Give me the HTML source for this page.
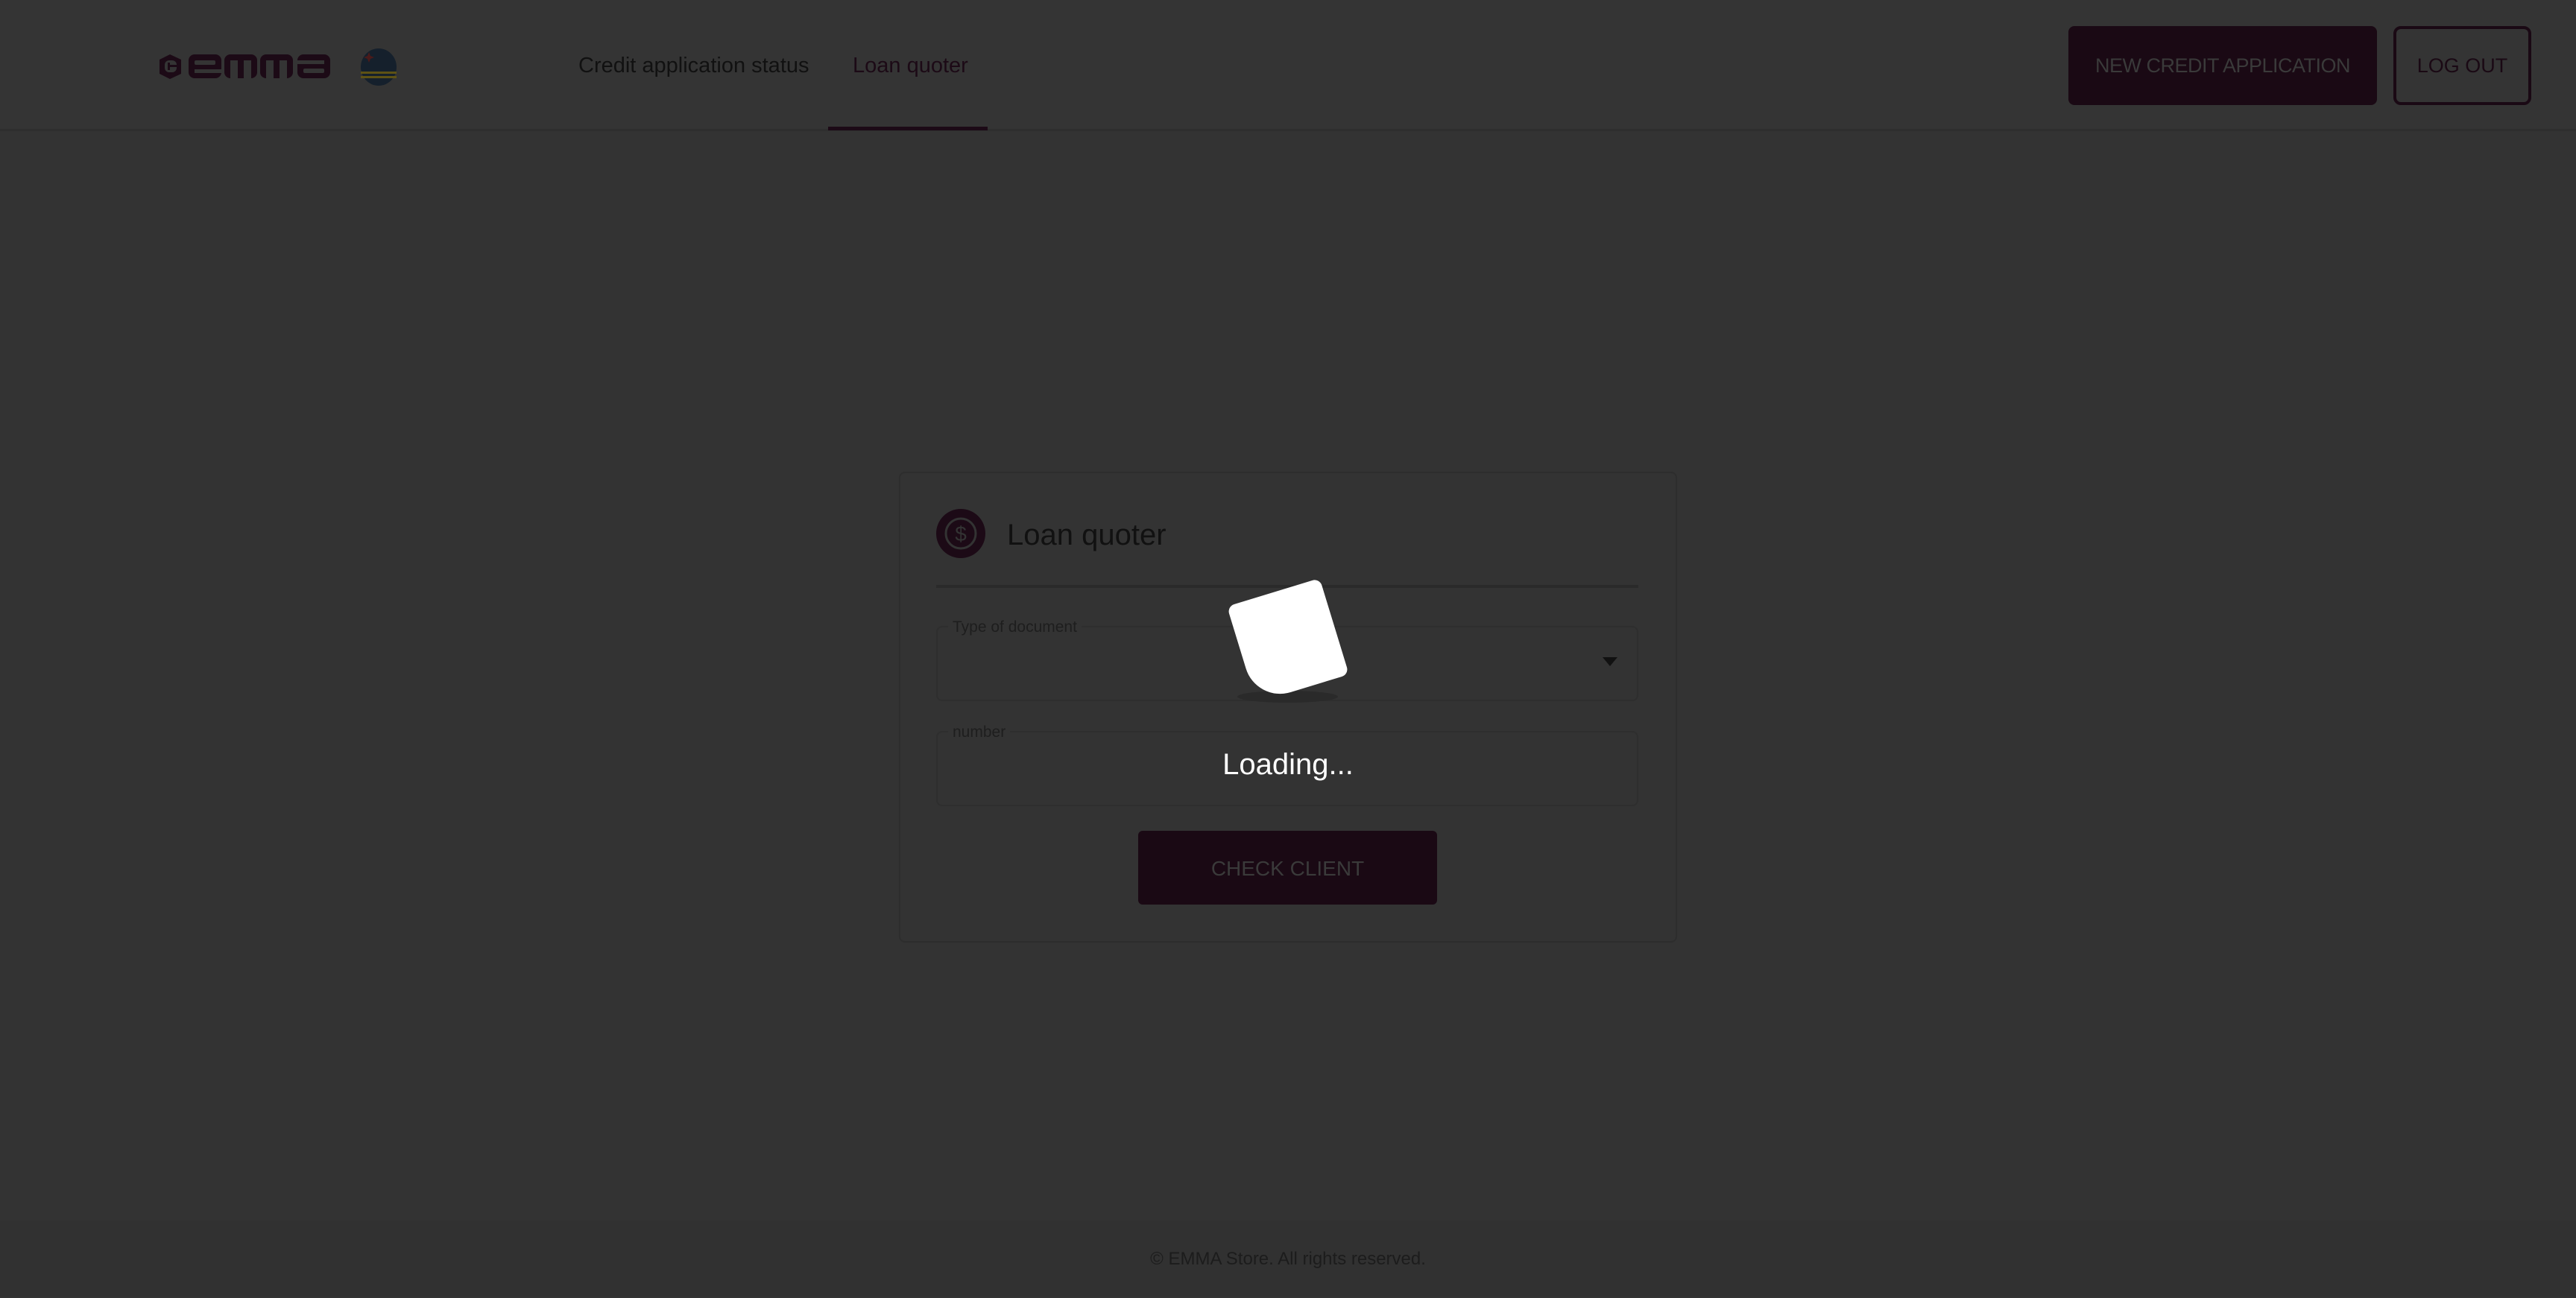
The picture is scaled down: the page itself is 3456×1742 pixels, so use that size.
<!DOCTYPE html>
<html><head><meta charset="utf-8"><style>
*{margin:0;padding:0;box-sizing:border-box}
body{width:3456px;height:1740px;background:#333333;font-family:"Liberation Sans",sans-serif;position:relative;overflow:hidden}
.hdr{position:absolute;left:0;top:0;width:3456px;height:176px;background:#343434;border-bottom:3px solid #2e2e2e}
.nav{position:absolute;top:72px;font-size:29px;color:#111}
.abs{position:absolute}
.footer{position:absolute;left:0;top:1638px;width:3456px;height:102px;background:#313131;text-align:center;font-size:24px;color:#1c1c1c;line-height:104px}
.card{position:absolute;left:1206px;top:633px;width:1044px;height:632px;border:2px solid #2d2d2d;border-radius:8px}
.field{position:absolute;left:1256px;width:942px;height:101px;border:2px solid #2e2e2e;border-radius:8px}
.lbl{position:absolute;font-size:21px;color:#1e1e1e;background:#333;padding:0 6px}
</style></head><body>
<div class="hdr"></div>
<svg class="abs" style="left:212px;top:73px" width="245" height="33" viewBox="0 0 245 33">
<g fill="#1c0a16">
<polygon points="16,0 31,7 31,26 16,33 2,26 2,7"/>
<rect x="41" y="0" width="44" height="32" rx="8"/>
<rect x="89" y="0" width="44" height="32" rx="8"/>
<rect x="137" y="0" width="44" height="32" rx="8"/>
<rect x="187" y="0" width="44" height="32" rx="8"/>
</g>
<g fill="#343434">
<rect x="9" y="8" width="16" height="16" rx="6"/>
<rect x="49" y="8" width="28" height="6" rx="2"/>
<rect x="49" y="20" width="40" height="5"/>
<rect x="97" y="8" width="10" height="26"/>
<rect x="115" y="8" width="10" height="26"/>
<rect x="145" y="8" width="10" height="26"/>
<rect x="163" y="8" width="10" height="26"/>
<rect x="185" y="8" width="38" height="5"/>
<rect x="195" y="19" width="28" height="6" rx="2"/>
</g>
<g fill="#1c0a16"><rect x="13" y="14" width="12" height="3"/><rect x="13" y="11" width="3" height="10"/></g>
</svg>
<svg class="abs" style="left:484px;top:65px" width="48" height="50"><ellipse cx="24" cy="25" rx="24" ry="25" fill="#15202c"/><rect x="0" y="31" width="48" height="3" fill="#5e5214"/><rect x="0" y="37" width="48" height="3" fill="#5e5214"/><path d="M11,5 L13,10 L18,12 L13,14 L11,19 L9,14 L4,12 L9,10Z" fill="#4a1a1a"/></svg>
<div class="nav" style="left:776px">Credit application status</div>
<div class="nav" style="left:1144px;color:#1c0a16">Loan quoter</div>
<div class="abs" style="left:1111px;top:170px;width:214px;height:5px;background:#1c0a16"></div>
<div class="abs" style="left:2775px;top:35px;width:414px;height:106px;background:#1a0914;border-radius:8px;color:#3a3a3a;font-size:27px;text-align:center;line-height:106px;letter-spacing:-0.5px">NEW CREDIT APPLICATION</div>
<div class="abs" style="left:3211px;top:35px;width:185px;height:106px;border:4px solid #1a0914;border-radius:10px;color:#1a0914;font-size:27px;text-align:center;line-height:98px">LOG OUT</div>

<div class="card"></div>
<svg class="abs" style="left:1256px;top:683px" width="66" height="66"><circle cx="33" cy="33" r="33" fill="#1c0a16"/><circle cx="33" cy="33" r="20" fill="none" stroke="#333" stroke-width="3"/><text x="33" y="43" font-size="28" text-anchor="middle" fill="#333" font-family="Liberation Sans">$</text></svg>
<div class="abs" style="left:1351px;top:696px;font-size:40px;color:#111">Loan quoter</div>
<div class="abs" style="left:1256px;top:785px;width:942px;height:4px;background:#2a2a2a"></div>
<div class="field" style="top:840px"></div>
<div class="lbl" style="left:1272px;top:830px">Type of document</div>
<svg class="abs" style="left:2150px;top:882px" width="20" height="12"><path d="M0,0 H20 L10,12Z" fill="#111"/></svg>
<div class="field" style="top:981px"></div>
<div class="lbl" style="left:1272px;top:971px">number</div>
<div class="abs" style="left:1527px;top:1115px;width:401px;height:99px;background:#1a0914;border-radius:6px;color:#3a3a3a;font-size:28px;text-align:center;line-height:101px">CHECK CLIENT</div>

<div class="abs" style="left:1660px;top:927px;width:135px;height:16px;border-radius:50%;background:#2a2a2a"></div>
<div class="abs" style="left:1663px;top:792px;width:130px;height:135px;background:#fff;border-radius:10px 10px 10px 48px;transform:rotate(-17deg)"></div>
<div class="abs" style="left:1528px;top:1004px;width:400px;text-align:center;font-size:40px;color:#fff">Loading...</div>

<div class="footer">© EMMA Store. All rights reserved.</div>
</body></html>
